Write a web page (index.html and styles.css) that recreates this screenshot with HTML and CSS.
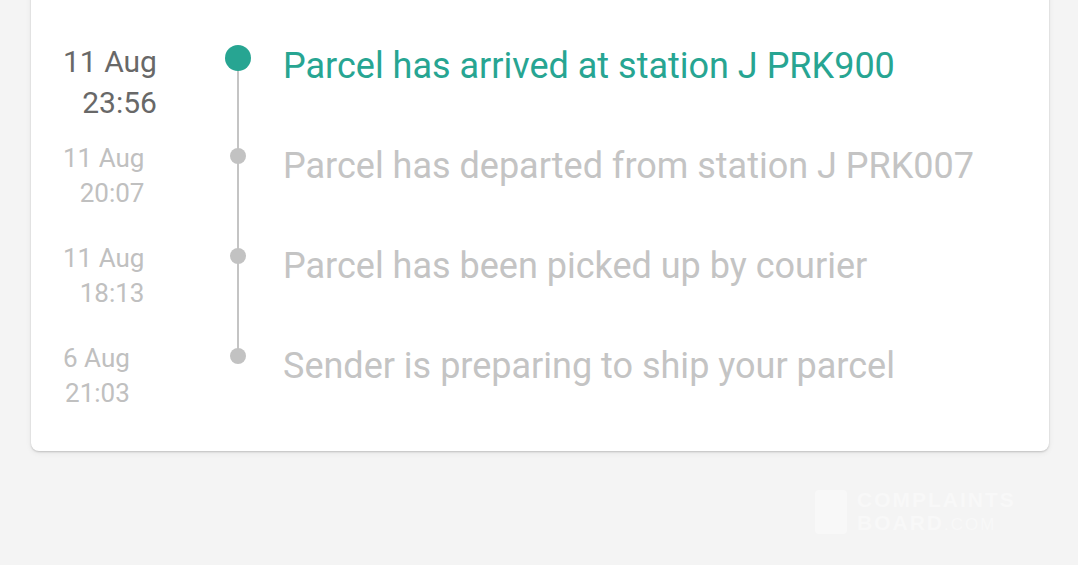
FILE: index.html
```html
<!DOCTYPE html>
<html>
<head>
<meta charset="utf-8">
<link rel="stylesheet" href="styles.css">
</head>
<body>
<div class="page">
  <div class="card">
    <ol class="timeline">
      <li class="event current">
        <div class="date"><span>11 Aug<br>23:56</span></div>
        <div class="marker"><span class="dot"></span></div>
        <div class="text">Parcel has arrived at station J PRK900</div>
      </li>
      <li class="event">
        <div class="date"><span>11 Aug<br>20:07</span></div>
        <div class="marker"><span class="dot"></span></div>
        <div class="text">Parcel has departed from station J PRK007</div>
      </li>
      <li class="event">
        <div class="date"><span>11 Aug<br>18:13</span></div>
        <div class="marker"><span class="dot"></span></div>
        <div class="text">Parcel has been picked up by courier</div>
      </li>
      <li class="event">
        <div class="date"><span>6 Aug<br>21:03</span></div>
        <div class="marker"><span class="dot"></span></div>
        <div class="text">Sender is preparing to ship your parcel</div>
      </li>
    </ol>
  </div>
  <div class="watermark">
    <div class="wm-logo"></div>
    <div class="wm-text"><div class="wm-line">COMPLAINTS</div><div class="wm-line">BOARD<span>.COM</span></div></div>
  </div>
</div>
</body>
</html>
```

FILE: styles.css
```css
html, body {
  margin: 0;
  padding: 0;
  background: #f4f4f4;
  font-family: Roboto, "Noto Sans", Arial, sans-serif;
  overflow: hidden;
}
.page {
  position: relative;
  height: 565px;
  padding: 0 29px 0 31px;
}
.card {
  margin-top: -12px;
  background: #ffffff;
  border-radius: 8px;
  box-shadow: 0 1px 2px rgba(0,0,0,0.18), 0 2px 6px rgba(0,0,0,0.06);
  padding: 58px 0 5px 32px;
}
.timeline {
  list-style: none;
  margin: 0;
  padding: 0;
  position: relative;
  display: grid;
  grid-auto-rows: 100px;
}
.timeline::before {
  content: "";
  position: absolute;
  left: 174px;
  width: 2px;
  top: 12px;
  bottom: 90px;
  background: #c4c4c4;
}
.event {
  display: grid;
  grid-template-columns: 150px 50px 1fr;
  align-items: start;
}
.date {
  margin-top: -5px;
}
.date span {
  display: inline-block;
  text-align: right;
  font-size: 26px;
  line-height: 35px;
  color: #c0c0c0;
}
.current .date span {
  font-size: 30px;
  line-height: 41px;
  color: #686868;
}
.marker {
  display: flex;
  justify-content: center;
  position: relative;
  z-index: 1;
}
.dot {
  width: 16px;
  height: 16px;
  border-radius: 50%;
  background: #c2c2c2;
  margin-top: 2px;
}
.current .dot {
  width: 26px;
  height: 26px;
  margin-top: -1px;
  background: #27a592;
}
.text {
  padding-left: 20px;
  font-size: 36px;
  line-height: 40px;
  color: #c4c4c4;
  white-space: nowrap;
}
.current .text {
  color: #27a592;
}
.watermark {
  position: absolute;
  left: 815px;
  top: 500px;
  display: flex;
  align-items: center;
  gap: 10px;
}
.wm-logo {
  width: 32px;
  height: 44px;
  border-radius: 4px;
  background: #f8f8f8;
}
.wm-text {
  font-family: "Liberation Sans", Arial, sans-serif;
  font-weight: bold;
  font-size: 21px;
  color: #f8f8f8;
  letter-spacing: 2px;
}
.wm-line {
  line-height: 23px;
}
.wm-text span {
  font-weight: normal;
  font-size: 17px;
}
```
